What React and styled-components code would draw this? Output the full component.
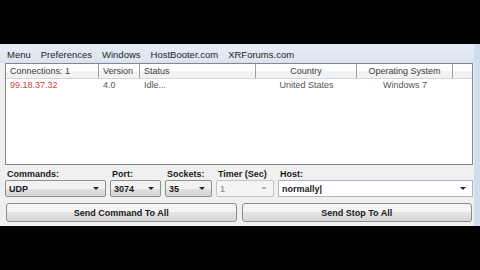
import React from "react";
import styled, { createGlobalStyle } from "styled-components";

const GlobalStyle = createGlobalStyle`
  body {
    margin: 0;
    background: #000;
    font-family: "Liberation Sans", Arial, sans-serif;
  }
`;

const columns = [
  { title: "Connections: 1", width: 93, align: "left" },
  { title: "Version", width: 41, align: "left" },
  { title: "Status", width: 116, align: "left" },
  { title: "Country", width: 101, align: "center" },
  { title: "Operating System", width: 96, align: "center" },
];

const rows = [
  { cells: ["99.18.37.32", "4.0", "Idle...", "United States", "Windows 7"] },
];

function App() {
  return (
    <>
      <GlobalStyle />
      <Screen>
        <Window>
          <MenuBar>
            <MenuItem>Menu</MenuItem>
            <MenuItem>Preferences</MenuItem>
            <MenuItem>Windows</MenuItem>
            <MenuItem>HostBooter.com</MenuItem>
            <MenuItem>XRForums.com</MenuItem>
          </MenuBar>
          <Body>
            <ListView>
              <HeaderRow>
                {columns.map((c) => (
                  <HeaderCell key={c.title} $w={c.width} $align={c.align}>
                    {c.title}
                  </HeaderCell>
                ))}
                <HeaderFiller />
              </HeaderRow>
              {rows.map((r, i) => (
                <Row key={i}>
                  {r.cells.map((v, j) => (
                    <Cell
                      key={j}
                      $w={columns[j].width}
                      $align={columns[j].align}
                      $red={j === 0}
                    >
                      {v}
                    </Cell>
                  ))}
                </Row>
              ))}
            </ListView>
            <Controls>
              <Field $w={101}>
                <Label>Commands:</Label>
                <Combo>
                  <ComboText>UDP</ComboText>
                  <Arrow />
                </Combo>
              </Field>
              <Field $w={51}>
                <Label>Port:</Label>
                <Combo>
                  <ComboText>3074</ComboText>
                  <Arrow />
                </Combo>
              </Field>
              <Field $w={47}>
                <Label>Sockets:</Label>
                <Combo>
                  <ComboText>35</ComboText>
                  <Arrow />
                </Combo>
              </Field>
              <Field $w={58}>
                <Label>Timer (Sec)</Label>
                <Combo $disabled>
                  <ComboText $disabled>1</ComboText>
                  <Arrow $disabled />
                </Combo>
              </Field>
              <Field $grow>
                <Label>Host:</Label>
                <Combo $edit>
                  <ComboText>normally|</ComboText>
                  <Arrow />
                </Combo>
              </Field>
            </Controls>
            <Buttons>
              <Button>Send Command To All</Button>
              <Button>Send Stop To All</Button>
            </Buttons>
          </Body>
        </Window>
      </Screen>
    </>
  );
}

const Screen = styled.div`
  height: 270px;
  display: flex;
  flex-direction: column;
  justify-content: center;
`;

const Window = styled.div`
  height: 182px;
  background: #f0f0f0;
  border-right: 6px solid #cfdeee;
  display: flex;
  flex-direction: column;
`;

const MenuBar = styled.div`
  height: 19px;
  display: flex;
  align-items: center;
  padding-left: 2px;
  padding-top: 2px;
  box-sizing: border-box;
  background: linear-gradient(#e6edf6, #dbe5f1);
  border-bottom: 1px solid #d6e0ec;
`;

const MenuItem = styled.span`
  font-size: 9.5px;
  color: #1e1e1e;
  padding: 0 5px;
`;

const Body = styled.div`
  flex: 1;
  display: flex;
  flex-direction: column;
  padding: 0 1px 0 5px;
`;

const ListView = styled.div`
  height: 102px;
  box-sizing: border-box;
  background: #fff;
  border: 1px solid #828790;
  display: flex;
  flex-direction: column;
`;

const HeaderRow = styled.div`
  height: 14px;
  display: flex;
  background: linear-gradient(#fff 45%, #f1f2f4 55%, #f1f2f4);
  border-bottom: 1px solid #d5d5d5;
`;

const HeaderCell = styled.div`
  width: ${(p) => p.$w}px;
  box-sizing: border-box;
  font-size: 9px;
  line-height: 14px;
  color: #3a3a3a;
  padding: 0 4px;
  text-align: ${(p) => p.$align};
  border-right: 1px solid #a0a0a0;
  white-space: nowrap;
  overflow: hidden;
`;

const HeaderFiller = styled.div`
  flex: 1;
`;

const Row = styled.div`
  height: 13px;
  display: flex;
`;

const Cell = styled.div`
  width: ${(p) => p.$w}px;
  box-sizing: border-box;
  font-size: 9px;
  line-height: 13px;
  padding: 0 4px;
  text-align: ${(p) => p.$align};
  color: ${(p) => (p.$red ? "#e04040" : "#555")};
  white-space: nowrap;
`;

const Controls = styled.div`
  display: flex;
  gap: 4px;
  margin-top: 3px;
`;

const Field = styled.div`
  display: flex;
  flex-direction: column;
  width: ${(p) => (p.$grow ? "auto" : `${p.$w}px`)};
  flex: ${(p) => (p.$grow ? 1 : "none")};
`;

const Label = styled.div`
  font-size: 9px;
  font-weight: bold;
  color: #1a1a1a;
  height: 12px;
  line-height: 12px;
  padding-left: 2px;
  white-space: nowrap;
`;

const Combo = styled.div`
  height: 17px;
  box-sizing: border-box;
  display: flex;
  align-items: center;
  border: 1px solid ${(p) => (p.$disabled ? "#c5c5c5" : "#8e8f8f")};
  border-radius: 2px;
  background: ${(p) =>
    p.$disabled
      ? "#f4f4f4"
      : p.$edit
      ? "#fff"
      : "linear-gradient(#f2f2f2 50%, #e0e0e0 50%, #d6d6d6)"};
  ${(p) => p.$edit && "border-color: #aab4c4; border-radius: 0;"}
`;

const ComboText = styled.span`
  flex: 1;
  font-size: 9px;
  font-weight: bold;
  padding-left: 3px;
  color: ${(p) => (p.$disabled ? "#999" : "#1a1a1a")};
  white-space: nowrap;
`;

const Arrow = styled.span`
  width: 0;
  height: 0;
  margin-right: 6px;
  border-left: 3px solid transparent;
  border-right: 3px solid transparent;
  border-top: 3px solid ${(p) => (p.$disabled ? "#b0b0b0" : "#222")};
`;

const Buttons = styled.div`
  display: flex;
  gap: 5px;
  margin-top: 6px;
  padding: 0 1px 0 1px;
`;

const Button = styled.div`
  flex: 1;
  height: 19px;
  box-sizing: border-box;
  border: 1px solid #8b8b8b;
  border-radius: 3px;
  background: linear-gradient(#f4f4f4 50%, #e4e4e4 50%, #d8d8d8);
  font-size: 9px;
  font-weight: bold;
  color: #1a1a1a;
  display: flex;
  align-items: center;
  justify-content: center;
`;

export default App;
